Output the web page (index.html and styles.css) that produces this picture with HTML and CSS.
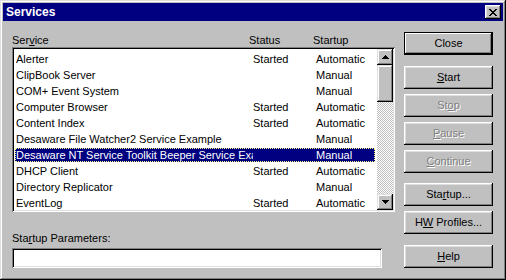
FILE: index.html
```html
<!DOCTYPE html>
<html lang="en">
<head>
    <meta charset="UTF-8">
    <title>Services</title>
    <link rel="stylesheet" href="styles.css">
</head>
<body>
    <div class="window">
        <div class="titlebar">
            <span class="title">Services</span>
            <div class="title-close">
                <svg width="8" height="7" viewBox="0 0 8 7" shape-rendering="crispEdges">
                    <path fill="#000" d="M0 0h2v1H0z M6 0h2v1H6z M1 1h2v1H1z M5 1h2v1H5z M2 2h4v1H2z M3 3h2v1H3z M2 4h4v1H2z M1 5h2v1H1z M5 5h2v1H5z M0 6h2v1H0z M6 6h2v1H6z"/>
                </svg>
            </div>
        </div>

        <div class="client">
            <!-- Service list -->
            <div class="left">
                <div class="cols">
                    <span class="col-service">Ser<u>v</u>ice</span>
                    <span class="col-status">Status</span>
                    <span>Startup</span>
                </div>
                <div class="listbox">
                    <div class="rows">
                        <div class="row"><span class="c-svc">Alerter</span><span class="c-status">Started</span><span>Automatic</span></div>
                        <div class="row"><span class="c-svc">ClipBook Server</span><span class="c-status"></span><span>Manual</span></div>
                        <div class="row"><span class="c-svc">COM+ Event System</span><span class="c-status"></span><span>Manual</span></div>
                        <div class="row"><span class="c-svc">Computer Browser</span><span class="c-status">Started</span><span>Automatic</span></div>
                        <div class="row"><span class="c-svc">Content Index</span><span class="c-status">Started</span><span>Automatic</span></div>
                        <div class="row"><span class="c-svc">Desaware File Watcher2 Service Example</span><span class="c-status"></span><span>Manual</span></div>
                        <div class="row selected"><span class="c-svc">Desaware NT Service Toolkit Beeper Service Example</span><span class="c-status"></span><span>Manual</span></div>
                        <div class="row"><span class="c-svc">DHCP Client</span><span class="c-status">Started</span><span>Automatic</span></div>
                        <div class="row"><span class="c-svc">Directory Replicator</span><span class="c-status"></span><span>Manual</span></div>
                        <div class="row"><span class="c-svc">EventLog</span><span class="c-status">Started</span><span>Automatic</span></div>
                    </div>
                    <div class="scrollbar">
                        <div class="sb-btn">
                            <svg width="7" height="4" viewBox="0 0 7 4" shape-rendering="crispEdges">
                                <path fill="#000" d="M3 0h1v1H3z M2 1h3v1H2z M1 2h5v1H1z M0 3h7v1H0z"/>
                            </svg>
                        </div>
                        <div class="sb-thumb"></div>
                        <div class="sb-track"></div>
                        <div class="sb-btn">
                            <svg width="7" height="4" viewBox="0 0 7 4" shape-rendering="crispEdges">
                                <path fill="#000" d="M0 0h7v1H0z M1 1h5v1H1z M2 2h3v1H2z M3 3h1v1H3z"/>
                            </svg>
                        </div>
                    </div>
                </div>

                <div class="params-label">Sta<u>r</u>tup Parameters:</div>
                <div class="params-input"></div>
            </div>

            <!-- Command buttons -->
            <div class="buttons">
                <div class="btn btn-default">Close</div>
                <div class="btn gap-lg"><span><u>S</u>tart</span></div>
                <div class="btn gap-sm disabled"><span>St<u>o</u>p</span></div>
                <div class="btn gap-sm disabled"><span><u>P</u>ause</span></div>
                <div class="btn gap-sm disabled"><span><u>C</u>ontinue</span></div>
                <div class="btn gap-md"><span>Sta<u>r</u>tup...</span></div>
                <div class="btn gap-sm"><span>H<u>W</u> Profiles...</span></div>
                <div class="btn gap-lg"><span><u>H</u>elp</span></div>
            </div>
        </div>
    </div>
</body>
</html>
```

FILE: styles.css
```css
/* Win95 dialog colours */
:root {
    --face: #c0c0c0;
    --light: #dfdfdf;
    --shadow: #808080;
    --title: #000080;
}

body {
    margin: 0;
    background-color: var(--face);
    font-family: "Liberation Sans", Arial, sans-serif;
    font-size: 11px;
    color: #000;
}

u {
    text-underline-offset: 1px;
}

.window {
    width: 506px;
    height: 280px;
    box-sizing: border-box;
    padding: 3px;
    background-color: var(--face);
    box-shadow: inset -1px -1px #000, inset 1px 1px var(--light),
                inset -2px -2px var(--shadow), inset 2px 2px #fff;
    display: flex;
    flex-direction: column;
}

.titlebar {
    height: 18px;
    flex-shrink: 0;
    background-color: var(--title);
    color: #fff;
    display: flex;
    align-items: center;
    padding: 0 2px 0 3px;
    font-size: 12px;
    font-weight: bold;
}

.title {
    flex: 1;
}

.title-close {
    width: 16px;
    height: 14px;
    background-color: var(--face);
    box-shadow: inset -1px -1px #000, inset 1px 1px #fff,
                inset -2px -2px var(--shadow), inset 2px 2px var(--light);
    display: flex;
    align-items: center;
    justify-content: center;
}

.client {
    flex: 1;
    display: flex;
}

.left {
    width: 383px;
    margin-left: 9px;
    padding-top: 13px;
}

.cols {
    display: flex;
    height: 13px;
    line-height: 13px;
}

.col-service {
    width: 237px;
}

.col-status {
    width: 64px;
}

.listbox {
    height: 165px;
    box-sizing: border-box;
    padding: 2px;
    background-color: #fff;
    box-shadow: inset 1px 1px var(--shadow), inset -1px -1px #fff,
                inset 2px 2px #000, inset -2px -2px var(--light);
    display: flex;
}

.rows {
    flex: 1;
    padding-top: 3px;
    overflow: hidden;
}

.row {
    display: flex;
    height: 14px;
    line-height: 14px;
    margin: 0 2px 2px 1px;
    padding-left: 1px;
    white-space: nowrap;
}

.row.selected {
    background-color: var(--title);
    color: #fff;
    outline: 1px dotted #ffff80;
    outline-offset: -1px;
}

.c-svc {
    width: 237px;
    overflow: hidden;
}

.c-status {
    width: 63px;
}

.scrollbar {
    width: 16px;
    display: flex;
    flex-direction: column;
}

.sb-btn, .sb-thumb {
    background-color: var(--face);
    box-shadow: inset -1px -1px #000, inset 1px 1px var(--light),
                inset -2px -2px var(--shadow), inset 2px 2px #fff;
}

.sb-btn {
    height: 16px;
    display: flex;
    align-items: center;
    justify-content: center;
}

.sb-thumb {
    height: 37px;
}

.sb-track {
    flex: 1;
    background: repeating-conic-gradient(var(--face) 0 25%, #fff 0 50%) 0 0 / 2px 2px;
}

.params-label {
    margin-top: 20px;
    height: 13px;
    line-height: 13px;
}

.params-input {
    margin-top: 3px;
    width: 370px;
    height: 20px;
    box-sizing: border-box;
    background-color: #fff;
    box-shadow: inset 1px 1px var(--shadow), inset -1px -1px #fff,
                inset 2px 2px #000, inset -2px -2px var(--light);
}

.buttons {
    width: 89px;
    margin-left: 9px;
    padding-top: 11px;
    display: flex;
    flex-direction: column;
}

.btn {
    height: 23px;
    box-sizing: border-box;
    background-color: var(--face);
    box-shadow: inset -1px -1px #000, inset 1px 1px #fff,
                inset -2px -2px var(--shadow), inset 2px 2px var(--light);
    display: flex;
    align-items: center;
    justify-content: center;
    padding-bottom: 1px;
}

.btn-default {
    border: 1px solid #000;
    box-shadow: inset -1px -1px #000, inset 1px 1px #fff,
                inset -2px -2px var(--shadow);
}

.btn.disabled {
    color: var(--shadow);
    text-shadow: 1px 1px 0 #fff;
}

.gap-sm {
    margin-top: 5px;
}

.gap-md {
    margin-top: 10px;
}

.gap-lg {
    margin-top: 11px;
}
```
